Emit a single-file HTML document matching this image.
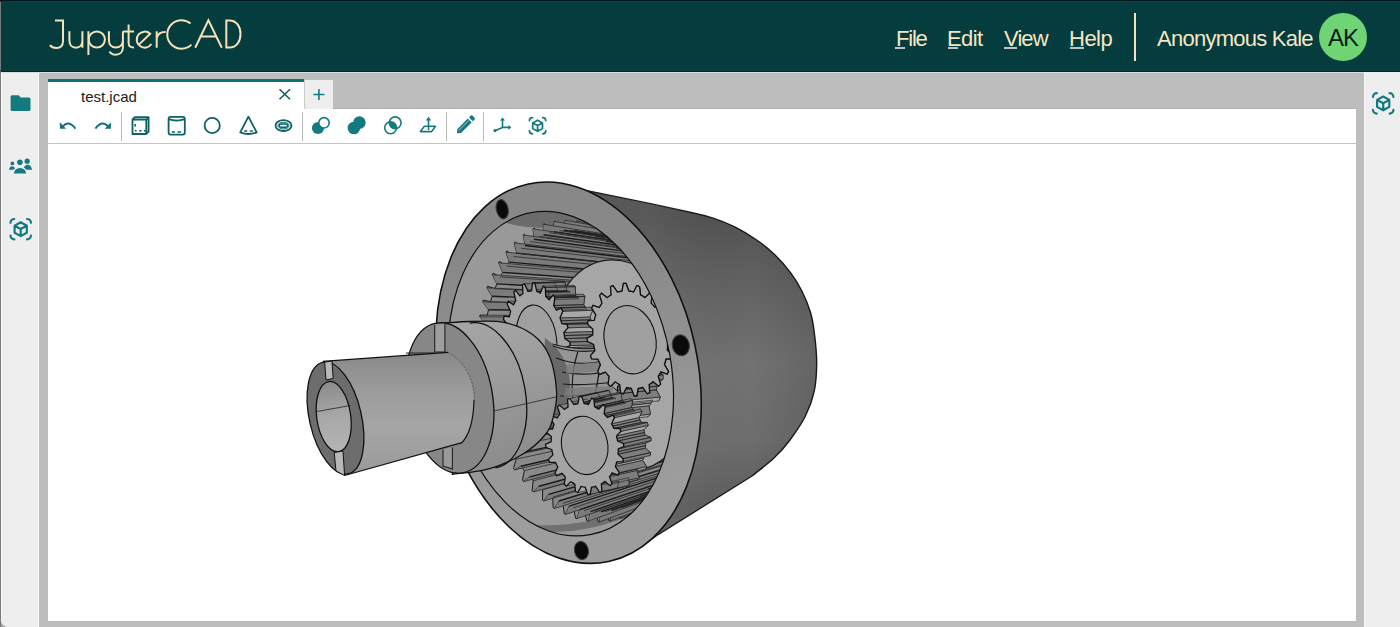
<!DOCTYPE html>
<html><head><meta charset="utf-8">
<style>
*{margin:0;padding:0;box-sizing:border-box}
html,body{width:1400px;height:627px;overflow:hidden;background:#eeeeee;font-family:"Liberation Sans",sans-serif}
.abs{position:absolute}
#hdr{left:0;top:0;width:1400px;height:72px;background:#053c3d;border-bottom:1px solid #02272a}
#lborder{left:0;top:0;width:1px;height:627px;background:#7a7a7a}
#lside{left:1px;top:72px;width:38px;height:555px;background:#eeeeee;border-left:1px solid #fafafa;border-right:1px solid #fafafa;border-bottom-left-radius:7px}
#main{left:39px;top:72px;width:1325px;height:555px;background:#bdbdbd}
#rside{left:1364px;top:72px;width:36px;height:555px;background:#eeeeee;border-left:1px solid #f8f8f8}
#tab{left:48px;top:79px;width:256px;height:31px;background:#fff;border-top:3px solid #0c7075}
#plus{left:304px;top:80px;width:29px;height:29px;background:#eeeeee;border-left:1px solid #c9c9c9}
#content{left:48px;top:109px;width:1308px;height:512px;background:#fff}
#toolbar{left:48px;top:109px;width:1308px;height:35px;border-bottom:1px solid #c4c4c4}
.sep{position:absolute;top:112px;width:1px;height:29px;background:#b8b8b8}
.menu{position:absolute;top:26px;font-size:22px;color:#f3e6c4;letter-spacing:-0.3px}
.ul{position:absolute;top:47px;height:2px;background:#b9c6c4}
.menu u{text-decoration:none;border-bottom:2px solid #9bb0b0}
svg{position:absolute;overflow:visible}
</style></head><body>
<div id="hdr" class="abs"></div>
<div class="abs" style="left:0;top:610px;width:12px;height:17px;background:#a0a0a0"></div>
<div id="lside" class="abs"></div>
<div id="main" class="abs"></div>
<div id="rside" class="abs"></div>
<div id="lborder" class="abs"></div>
<div class="abs" style="left:0;top:0;width:1400px;height:1px;background:#01161b"></div>
<div class="abs" style="left:0;top:1px;width:1400px;height:1px;background:#113d42"></div>
<div class="abs" style="left:1px;top:72px;width:1363px;height:1px;background:#dcdcdc"></div>
<div class="abs" style="left:0;top:70px;width:1400px;height:1px;background:#123f43"></div>
<div class="abs" style="left:333px;top:108px;width:1023px;height:1px;background:#aeaeae"></div>
<div id="tab" class="abs"></div>
<div id="plus" class="abs"></div>
<div id="content" class="abs"></div>
<div id="toolbar" class="abs"></div>
<div class="sep" style="left:121px"></div>
<div class="sep" style="left:302px"></div>
<div class="sep" style="left:446px"></div>
<div class="sep" style="left:483px"></div>

<!--MODEL-->
<svg width="1400" height="627" style="left:0;top:0">
<defs>
<linearGradient id="gBody" gradientUnits="userSpaceOnUse" x1="700" y1="205" x2="740" y2="500"><stop offset="0" stop-color="#4e4e4e"/><stop offset="0.25" stop-color="#606060"/><stop offset="0.55" stop-color="#727272"/><stop offset="0.8" stop-color="#6e6e6e"/><stop offset="1" stop-color="#5e5e5e"/></linearGradient>
<linearGradient id="gBody2" gradientUnits="userSpaceOnUse" x1="650" y1="0" x2="820" y2="0"><stop offset="0" stop-color="#fff" stop-opacity="0.06"/><stop offset="0.6" stop-color="#000" stop-opacity="0"/><stop offset="1" stop-color="#000" stop-opacity="0.12"/></linearGradient>
<linearGradient id="gShaft" gradientUnits="userSpaceOnUse" x1="0" y1="355" x2="0" y2="475"><stop offset="0" stop-color="#8a8a8a"/><stop offset="0.3" stop-color="#9c9c9c"/><stop offset="0.6" stop-color="#a5a5a5"/><stop offset="1" stop-color="#9a9a9a"/></linearGradient>
<linearGradient id="gCollar" x1="0" y1="0" x2="0.2" y2="1"><stop offset="0" stop-color="#a6a6a6"/><stop offset="0.5" stop-color="#9b9b9b"/><stop offset="1" stop-color="#8c8c8c"/></linearGradient>
<linearGradient id="gBore" x1="0" y1="0" x2="0" y2="1"><stop offset="0" stop-color="#8a8a8a"/><stop offset="0.5" stop-color="#a8a8a8"/><stop offset="1" stop-color="#b4b4b4"/></linearGradient>
<clipPath id="cE2"><ellipse cx="560.7" cy="373.7" rx="163.7" ry="110.7" transform="rotate(79.6 560.7 373.7)"/></clipPath>
<linearGradient id="gFlange" gradientUnits="userSpaceOnUse" x1="435" y1="0" x2="700" y2="0"><stop offset="0" stop-color="#888888"/><stop offset="0.5" stop-color="#929292"/><stop offset="1" stop-color="#9d9d9d"/></linearGradient>
</defs>
<path d="M576,188.5 L649.3,203.4  C656.1,204.9 679.5,209.9 690,212.3 C700.5,214.7 704.8,215.5 712.3,217.9 C719.8,220.3 727.2,223.1 734.7,226.8 C742.2,230.5 750.3,235.5 757,240.2 C763.7,244.8 769.2,249.3 774.8,254.7 C780.4,260.1 786,266.6 790.5,272.6 C795,278.6 798.2,283.8 801.6,290.5 C805,297.2 808.4,305.4 810.6,312.8 C812.8,320.2 813.6,326.7 814.6,335.1 C815.6,343.5 816.8,353.8 816.7,363.2 C816.6,372.6 816.1,382.6 814.2,391.4 C812.3,400.2 809.5,407.8 805.4,416 C801.3,424.2 794.8,433.5 789.6,440.5 C784.4,447.5 780.3,452.1 774,458 C767.7,463.9 755.7,473 752,476 L658.5,534.3 L637,549.7 L602.8,561.2 L585,562 L565,368 Z" fill="url(#gBody)" stroke="#1a1a1a" stroke-width="1.4"/>
<path d="M576,188.5 L649.3,203.4  C656.1,204.9 679.5,209.9 690,212.3 C700.5,214.7 704.8,215.5 712.3,217.9 C719.8,220.3 727.2,223.1 734.7,226.8 C742.2,230.5 750.3,235.5 757,240.2 C763.7,244.8 769.2,249.3 774.8,254.7 C780.4,260.1 786,266.6 790.5,272.6 C795,278.6 798.2,283.8 801.6,290.5 C805,297.2 808.4,305.4 810.6,312.8 C812.8,320.2 813.6,326.7 814.6,335.1 C815.6,343.5 816.8,353.8 816.7,363.2 C816.6,372.6 816.1,382.6 814.2,391.4 C812.3,400.2 809.5,407.8 805.4,416 C801.3,424.2 794.8,433.5 789.6,440.5 C784.4,447.5 780.3,452.1 774,458 C767.7,463.9 755.7,473 752,476 L658.5,534.3 L637,549.7 L602.8,561.2 L585,562 L565,368 Z" fill="url(#gBody2)"/>
<ellipse cx="568.5" cy="372.7" rx="193" ry="129.4" transform="rotate(78 568.5 372.7)" fill="url(#gFlange)" stroke="#111" stroke-width="1.6"/>
<g clip-path="url(#cE2)">
<rect x="390" y="200" width="350" height="340" fill="#999999"/>
<path d="M503,222 L520,200 L650,200 L650,262 C620,238 585,228 550,228 C530,228 515,226 503,222 Z" fill="#6c6c6c"/><path d="M530,530 C565,536 610,528 650,506 L646,500 C610,520 570,527 535,525 Z" fill="#707070"/>
<path d="M677.1,355.3 L677.7,358.4 L684.9,361.4 L685.2,363.3 L679,367.5 L679.4,370.5 L679.7,373.6 L686.8,377.7 L686.9,379.6 L680.4,382.7 L680.5,385.8 L680.6,388.8 L687.4,393.9 L687.4,395.9 L680.5,397.9 L680.4,400.8 L680.3,403.8 L686.8,409.9 L686.7,411.8 L679.6,412.7 L679.2,415.6 L678.9,418.4 L685,425.4 L684.7,427.2 L677.5,427 L676.9,429.8 L676.3,432.5 L682,440.3 L681.6,442 L674.2,440.6 L673.5,443.3 L672.7,445.9 L677.8,454.4 L677.2,456 L670,453.5 L669,455.9 L667.9,458.3 L672.5,467.5 L671.8,469 L664.6,465.3 L663.4,467.6 L662.2,469.8 L666.2,479.4 L665.3,480.8 L658.3,476.1 L657,478.1 L655.6,480.1 L658.8,490.1 L657.9,491.3 L651.2,485.7 L649.6,487.4 L648.1,489.1 L650.6,499.4 L649.5,500.4 L643.2,493.9 L641.5,495.3 L639.8,496.7 L641.5,507.2 L640.4,508 L634.5,500.6 L632.7,501.8 L630.8,502.9 L631.8,513.4 L630.6,514 L625.2,505.9 L623.2,506.7 L621.3,507.5 L621.5,517.9 L620.2,518.4 L615.4,509.5 L613.3,510.1 L611.3,510.5 L610.7,520.7 L609.4,521 L605.2,511.6 L603.1,511.8 L601,511.9 L599.6,521.8 L598.3,521.8 L594.7,511.9 L592.6,511.8 L590.5,511.6 L588.3,521.1 L586.9,520.9 L584.1,510.7 L582,510.2 L579.8,509.7 L576.9,518.6 L575.6,518.2 L573.5,507.8 L571.4,507 L569.2,506.2 L565.6,514.4 L564.3,513.8 L562.9,503.3 L560.9,502.2 L558.8,501 L554.5,508.5 L553.2,507.7 L552.7,497.2 L550.6,495.8 L548.6,494.4 L543.7,501 L542.5,500 L542.7,489.7 L540.8,488 L538.9,486.3 L533.4,492 L532.2,490.8 L533.2,480.8 L531.4,478.8 L529.6,476.9 L523.6,481.6 L522.5,480.2 L524.3,470.6 L522.6,468.4 L520.9,466.2 L514.6,469.9 L513.5,468.4 L516.1,459.2 L514.5,456.8 L513,454.4 L506.3,457 L505.4,455.3 L508.7,446.8 L507.3,444.2 L505.9,441.6 L498.9,443.1 L498.1,441.3 L502.1,433.5 L500.9,430.8 L499.7,428 L492.5,428.3 L491.8,426.5 L496.4,419.5 L495.4,416.6 L494.5,413.7 L487.2,412.9 L486.6,411 L491.8,404.9 L491,401.9 L490.2,398.9 L482.9,397 L482.5,395.1 L488.2,389.9 L487.7,386.9 L487.1,383.8 L479.9,380.8 L479.6,378.9 L485.8,374.7 L485.4,371.7 L485.1,368.6 L478,364.5 L477.9,362.6 L484.4,359.5 L484.3,356.4 L484.2,353.4 L477.4,348.3 L477.4,346.3 L484.3,344.3 L484.4,341.4 L484.5,338.4 L478,332.3 L478.1,330.4 L485.2,329.5 L485.6,326.6 L485.9,323.8 L479.8,316.8 L480.1,315 L487.3,315.2 L487.9,312.4 L488.5,309.7 L482.8,301.9 L483.2,300.2 L490.6,301.6 L491.3,298.9 L492.1,296.3 L487,287.8 L487.6,286.2 L494.8,288.7 L495.8,286.3 L496.9,283.9 L492.3,274.7 L493,273.2 L500.2,276.9 L501.4,274.6 L502.6,272.4 L498.6,262.8 L499.5,261.4 L506.5,266.1 L507.8,264.1 L509.2,262.1 L506,252.1 L506.9,250.9 L513.6,256.5 L515.2,254.8 L516.7,253.1 L514.2,242.8 L515.3,241.8 L521.6,248.3 L523.3,246.9 L525,245.5 L523.3,235 L524.4,234.2 L530.3,241.6 L532.1,240.4 L534,239.3 L533,228.8 L534.2,228.2 L539.6,236.3 L541.6,235.5 L543.5,234.7 L543.3,224.3 L544.6,223.8 L549.4,232.7 L551.5,232.1 L553.5,231.7 L554.1,221.5 L555.4,221.2 L559.6,230.6 L561.7,230.4 L563.8,230.3 L565.2,220.4 L566.5,220.4 L570.1,230.3 L572.2,230.4 L574.3,230.6 L576.5,221.1 L577.9,221.3 L580.7,231.5 L582.8,232 L585,232.5 L587.9,223.6 L589.2,224 L591.3,234.4 L593.4,235.2 L595.6,236 L599.2,227.8 L600.5,228.4 L601.9,238.9 L603.9,240 L606,241.2 L610.3,233.7 L611.6,234.5 L612.1,245 L614.2,246.4 L616.2,247.8 L621.1,241.2 L622.3,242.2 L622.1,252.5 L624,254.2 L625.9,255.9 L631.4,250.2 L632.6,251.4 L631.6,261.4 L633.4,263.4 L635.2,265.3 L641.2,260.6 L642.3,262 L640.5,271.6 L642.2,273.8 L643.9,276 L650.2,272.3 L651.3,273.8 L648.7,283 L650.3,285.4 L651.8,287.8 L658.5,285.2 L659.4,286.9 L656.1,295.4 L657.5,298 L658.9,300.6 L665.9,299.1 L666.7,300.9 L662.7,308.7 L663.9,311.4 L665.1,314.2 L672.3,313.9 L673,315.7 L668.4,322.7 L669.4,325.6 L670.3,328.5 L677.6,329.3 L678.2,331.2 L673,337.3 L673.8,340.3 L674.6,343.3 L681.9,345.2 L682.3,347.1 L676.6,352.3Z" fill="#8a8a8a" stroke="#1a1a1a" stroke-width="1"/>
<path d="M677.7,358.4 L684.9,361.4 L854.3,346.3 L847.1,344.6Z M679.7,373.6 L686.8,377.7 L855.5,356.7 L848.6,354.3Z M680.6,388.8 L687.4,393.9 L855.3,367.1 L848.8,364.2Z M680.3,403.8 L686.8,409.9 L853.7,377.5 L847.7,374Z M678.9,418.4 L685,425.4 L850.8,387.8 L845.3,383.7Z M676.3,432.5 L682,440.3 L846.7,398 L841.7,393.2Z M672.7,445.9 L677.8,454.4 L841.3,407.8 L837,402.5Z M667.9,458.3 L672.5,467.5 L834.9,417.3 L831.3,411.5Z M662.2,469.8 L666.2,479.4 L827.6,426.2 L824.7,419.9Z M655.6,480.1 L658.8,490.1 L819.4,434.5 L817.3,427.7Z M648.1,489.1 L650.6,499.4 L810.6,441.9 L809.2,434.8Z M639.8,496.7 L641.5,507.2 L801.1,448.5 L800.4,441.1Z M630.8,502.9 L631.8,513.4 L791.1,454 L791.2,446.4Z M621.3,507.5 L621.5,517.9 L780.7,458.3 L781.5,450.7Z M611.3,510.5 L610.7,520.7 L770,461.4 L771.6,453.8Z M601,511.9 L599.6,521.8 L759.2,463.3 L761.5,455.8Z M590.5,511.6 L588.3,521.1 L748.4,463.8 L751.3,456.6Z M579.8,509.7 L576.9,518.6 L737.6,462.9 L741.1,456Z M569.2,506.2 L565.6,514.4 L726.9,460.7 L731.1,454.3Z M558.8,501 L554.5,508.5 L716.6,457.2 L721.3,451.3Z M548.6,494.4 L543.7,501 L706.6,452.4 L711.9,447Z M538.9,486.3 L533.4,492 L697.1,446.3 L702.9,441.7Z M529.6,476.9 L523.6,481.6 L688.2,439.1 L694.4,435.2Z M520.9,466.2 L514.6,469.9 L680,430.8 L686.5,427.7Z M513,454.4 L506.3,457 L672.6,421.6 L679.4,419.3Z M505.9,441.6 L498.9,443.1 L666,411.5 L673,410.1Z M499.7,428 L492.5,428.3 L660.2,400.7 L667.4,400.1Z M494.5,413.7 L487.2,412.9 L655.5,389.3 L662.7,389.7Z M490.2,398.9 L482.9,397 L651.8,377.5 L659,378.7Z M487.1,383.8 L479.9,380.8 L649.2,365.5 L656.3,367.5Z M485.1,368.6 L478,364.5 L647.6,353.3 L654.6,356.2Z M484.2,353.4 L477.4,348.3 L647.2,341.1 L654,344.9Z M484.5,338.4 L478,332.3 L647.9,329.2 L654.4,333.7Z M485.9,323.8 L479.8,316.8 L649.8,317.6 L655.9,322.8Z M488.5,309.7 L482.8,301.9 L652.7,306.5 L658.5,312.3Z M492.1,296.3 L487,287.8 L656.8,296.1 L662,302.4Z M496.9,283.9 L492.3,274.7 L661.9,286.4 L666.6,293.2Z M502.6,272.4 L498.6,262.8 L668,277.7 L672.1,284.9Z M509.2,262.1 L506,252.1 L675.1,269.9 L678.5,277.4Z M516.7,253.1 L514.2,242.8 L683,263.3 L685.8,271Z M525,245.5 L523.3,235 L691.7,257.8 L693.8,265.6Z M534,239.3 L533,228.8 L701.2,253.7 L702.5,261.4Z M543.5,234.7 L543.3,224.3 L711.2,250.8 L711.8,258.4Z M553.5,231.7 L554.1,221.5 L721.8,249.2 L721.6,256.6Z M563.8,230.3 L565.2,220.4 L732.8,248.9 L731.8,256Z M574.3,230.6 L576.5,221.1 L744,250 L742.3,256.7Z M585,232.5 L587.9,223.6 L755.4,252.3 L753,258.5Z M595.6,236 L599.2,227.8 L766.8,255.9 L763.6,261.5Z M606,241.2 L610.3,233.7 L778.2,260.5 L774.2,265.5Z M616.2,247.8 L621.1,241.2 L789.2,266.2 L784.6,270.6Z M625.9,255.9 L631.4,250.2 L799.9,272.9 L794.7,276.5Z M635.2,265.3 L641.2,260.6 L810,280.3 L804.3,283.3Z M643.9,276 L650.2,272.3 L819.5,288.5 L813.2,290.7Z M651.8,287.8 L658.5,285.2 L828.1,297.2 L821.4,298.8Z M658.9,300.6 L665.9,299.1 L835.7,306.4 L828.8,307.3Z M665.1,314.2 L672.3,313.9 L842.3,316 L835.1,316.2Z M670.3,328.5 L677.6,329.3 L847.6,325.9 L840.3,325.5Z M674.6,343.3 L681.9,345.2 L851.6,336 L844.3,334.9Z" fill="#7b7b7b"/>
<path d="M677.7,358.4 L847.1,344.6 M679.7,373.6 L848.6,354.3 M680.6,388.8 L848.8,364.2 M680.3,403.8 L847.7,374 M678.9,418.4 L845.3,383.7 M676.3,432.5 L841.7,393.2 M672.7,445.9 L837,402.5 M667.9,458.3 L831.3,411.5 M662.2,469.8 L824.7,419.9 M655.6,480.1 L817.3,427.7 M648.1,489.1 L809.2,434.8 M639.8,496.7 L800.4,441.1 M630.8,502.9 L791.2,446.4 M621.3,507.5 L781.5,450.7 M611.3,510.5 L771.6,453.8 M601,511.9 L761.5,455.8 M590.5,511.6 L751.3,456.6 M579.8,509.7 L741.1,456 M569.2,506.2 L731.1,454.3 M558.8,501 L721.3,451.3 M548.6,494.4 L711.9,447 M538.9,486.3 L702.9,441.7 M529.6,476.9 L694.4,435.2 M520.9,466.2 L686.5,427.7 M513,454.4 L679.4,419.3 M505.9,441.6 L673,410.1 M499.7,428 L667.4,400.1 M494.5,413.7 L662.7,389.7 M490.2,398.9 L659,378.7 M487.1,383.8 L656.3,367.5 M485.1,368.6 L654.6,356.2 M484.2,353.4 L654,344.9 M484.5,338.4 L654.4,333.7 M485.9,323.8 L655.9,322.8 M488.5,309.7 L658.5,312.3 M492.1,296.3 L662,302.4 M496.9,283.9 L666.6,293.2 M502.6,272.4 L672.1,284.9 M509.2,262.1 L678.5,277.4 M516.7,253.1 L685.8,271 M525,245.5 L693.8,265.6 M534,239.3 L702.5,261.4 M543.5,234.7 L711.8,258.4 M553.5,231.7 L721.6,256.6 M563.8,230.3 L731.8,256 M574.3,230.6 L742.3,256.7 M585,232.5 L753,258.5 M595.6,236 L763.6,261.5 M606,241.2 L774.2,265.5 M616.2,247.8 L784.6,270.6 M625.9,255.9 L794.7,276.5 M635.2,265.3 L804.3,283.3 M643.9,276 L813.2,290.7 M651.8,287.8 L821.4,298.8 M658.9,300.6 L828.8,307.3 M665.1,314.2 L835.1,316.2 M670.3,328.5 L840.3,325.5 M674.6,343.3 L844.3,334.9" stroke="#1a1a1a" stroke-width="1.4" fill="none"/>
<path d="M684.9,361.4 L854.3,346.3 M679,367.5 L848.2,350.4 M686.8,377.7 L855.5,356.7 M680.4,382.7 L848.9,360.2 M687.4,393.9 L855.3,367.1 M680.5,397.9 L848.3,370 M686.8,409.9 L853.7,377.5 M679.6,412.7 L846.4,379.8 M685,425.4 L850.8,387.8 M677.5,427 L843.3,389.4 M682,440.3 L846.7,398 M674.2,440.6 L839,398.8 M677.8,454.4 L841.3,407.8 M670,453.5 L833.7,407.9 M672.5,467.5 L834.9,417.3 M664.6,465.3 L827.5,416.6 M666.2,479.4 L827.6,426.2 M658.3,476.1 L820.4,424.7 M658.8,490.1 L819.4,434.5 M651.2,485.7 L812.5,432.1 M650.6,499.4 L810.6,441.9 M643.2,493.9 L804,438.7 M641.5,507.2 L801.1,448.5 M634.5,500.6 L794.9,444.4 M631.8,513.4 L791.1,454 M625.2,505.9 L785.4,449.1 M621.5,517.9 L780.7,458.3 M615.4,509.5 L775.6,452.7 M610.7,520.7 L770,461.4 M605.2,511.6 L765.5,455.2 M599.6,521.8 L759.2,463.3 M594.7,511.9 L755.4,456.4 M588.3,521.1 L748.4,463.8 M584.1,510.7 L745.2,456.4 M576.9,518.6 L737.6,462.9 M573.5,507.8 L735.1,455.1 M565.6,514.4 L726.9,460.7 M562.9,503.3 L725.2,452.6 M554.5,508.5 L716.6,457.2 M552.7,497.2 L715.6,448.9 M543.7,501 L706.6,452.4 M542.7,489.7 L706.4,444 M533.4,492 L697.1,446.3 M533.2,480.8 L697.7,437.9 M523.6,481.6 L688.2,439.1 M524.3,470.6 L689.6,430.8 M514.6,469.9 L680,430.8 M516.1,459.2 L682.1,422.7 M506.3,457 L672.6,421.6 M508.7,446.8 L675.4,413.8 M498.9,443.1 L666,411.5 M502.1,433.5 L669.5,404.2 M492.5,428.3 L660.2,400.7 M496.4,419.5 L664.5,393.9 M487.2,412.9 L655.5,389.3 M491.8,404.9 L660.4,383.2 M482.9,397 L651.8,377.5 M488.2,389.9 L657.3,372.1 M479.9,380.8 L649.2,365.5 M485.8,374.7 L655.2,360.8 M478,364.5 L647.6,353.3 M484.4,359.5 L654.1,349.4 M477.4,348.3 L647.2,341.1 M484.3,344.3 L654.1,338.1 M478,332.3 L647.9,329.2 M485.2,329.5 L655.2,327.1 M479.8,316.8 L649.8,317.6 M487.3,315.2 L657.3,316.5 M482.8,301.9 L652.7,306.5 M490.6,301.6 L660.5,306.3 M487,287.8 L656.8,296.1 M494.8,288.7 L664.7,296.8 M492.3,274.7 L661.9,286.4 M500.2,276.9 L669.8,288.1 M498.6,262.8 L668,277.7 M506.5,266.1 L675.9,280.3 M506,252.1 L675.1,269.9 M513.6,256.5 L682.8,273.4 M514.2,242.8 L683,263.3 M521.6,248.3 L690.5,267.6 M523.3,235 L691.7,257.8 M530.3,241.6 L699,262.9 M533,228.8 L701.2,253.7 M539.6,236.3 L708.1,259.4 M543.3,224.3 L711.2,250.8 M549.4,232.7 L717.7,257.1 M554.1,221.5 L721.8,249.2 M559.6,230.6 L727.7,256.1 M565.2,220.4 L732.8,248.9 M570.1,230.3 L738.1,256.3 M576.5,221.1 L744,250 M580.7,231.5 L748.7,257.6 M587.9,223.6 L755.4,252.3 M591.3,234.4 L759.4,260.2 M599.2,227.8 L766.8,255.9 M601.9,238.9 L770,263.8 M610.3,233.7 L778.2,260.5 M612.1,245 L780.5,268.5 M621.1,241.2 L789.2,266.2 M622.1,252.5 L790.7,274.1 M631.4,250.2 L799.9,272.9 M631.6,261.4 L800.5,280.5 M641.2,260.6 L810,280.3 M640.5,271.6 L809.7,287.7 M650.2,272.3 L819.5,288.5 M648.7,283 L818.2,295.5 M658.5,285.2 L828.1,297.2 M656.1,295.4 L825.9,303.9 M665.9,299.1 L835.7,306.4 M662.7,308.7 L832.7,312.6 M672.3,313.9 L842.3,316 M668.4,322.7 L838.4,321.8 M677.6,329.3 L847.6,325.9 M673,337.3 L842.9,331.1 M681.9,345.2 L851.6,336 M676.6,352.3 L846.2,340.7" stroke="#2a2a2a" stroke-width="0.8" fill="none"/>
<ellipse cx="622" cy="365" rx="72" ry="106" transform="rotate(-10 622 365)" fill="#a6a6a6" stroke="#1a1a1a" stroke-width="1.1"/>
<path d="M656.8,366.4 L657.4,370.4 L663,374.8 L663,379.4 L657.5,382.3 L657,386.2 L656.3,389.9 L660.2,397 L658.7,400.9 L652.6,400.2 L650.9,403.2 L649,405.9 L650.4,414.2 L647.7,416.8 L642.1,412.5 L639.5,414 L636.8,415.2 L635.5,423.1 L632.2,423.7 L628.3,416.7 L625.3,416.5 L622.3,415.9 L618.5,421.9 L615.2,420.4 L613.7,412.1 L611,410.2 L608.3,408 L602.8,410.8 L600.1,407.6 L601.3,399.6 L599.4,396.4 L597.6,392.9 L591.4,392 L589.9,387.7 L593.6,381.6 L592.8,377.7 L592.2,373.7 L586.7,369.3 L586.6,364.7 L592.1,361.8 L592.6,357.9 L593.3,354.2 L589.4,347.1 L590.9,343.2 L597,343.9 L598.7,340.9 L600.7,338.2 L599.2,329.9 L601.9,327.4 L607.5,331.7 L610.1,330.1 L612.8,328.9 L614.1,321 L617.4,320.4 L621.4,327.4 L624.3,327.6 L627.3,328.2 L631.1,322.2 L634.4,323.7 L635.9,332 L638.7,333.9 L641.3,336.1 L646.8,333.3 L649.5,336.5 L648.3,344.5 L650.3,347.7 L652,351.2 L658.2,352.1 L659.7,356.4 L656,362.5Z" fill="#8c8c8c" stroke="#1a1a1a" stroke-width="0.8"/>
<path d="M623.2,383.4 L617.7,386.3 L657.5,382.3 L663,379.4Z M620.4,400.9 L618.9,404.9 L658.7,400.9 L660.2,397Z M612.8,404.1 L611.1,407.1 L650.9,403.2 L652.6,400.2Z M611.1,407.1 L609.2,409.9 L649,405.9 L650.9,403.2Z M610.6,418.2 L607.9,420.7 L647.7,416.8 L650.4,414.2Z M602.3,416.4 L599.7,417.9 L639.5,414 L642.1,412.5Z M599.7,417.9 L597,419.2 L636.8,415.2 L639.5,414Z M595.7,427.1 L592.4,427.6 L632.2,423.7 L635.5,423.1Z M582.5,419.9 L578.7,425.8 L618.5,421.9 L622.3,415.9Z M568.5,411.9 L563,414.8 L602.8,410.8 L608.3,408Z M619.9,360.4 L616.2,366.4 L656,362.5 L659.7,356.4Z" fill="#a8a8a8" stroke="#1a1a1a" stroke-width="0.6"/>
<path d="M617,370.4 L617.6,374.4 L657.4,370.4 L656.8,366.4Z M617.6,374.4 L623.1,378.7 L663,374.8 L657.4,370.4Z M623.1,378.7 L623.2,383.4 L663,379.4 L663,374.8Z M617.7,386.3 L617.2,390.1 L657,386.2 L657.5,382.3Z M617.2,390.1 L616.5,393.9 L656.3,389.9 L657,386.2Z M616.5,393.9 L620.4,400.9 L660.2,397 L656.3,389.9Z M609.2,409.9 L610.6,418.2 L650.4,414.2 L649,405.9Z M597,419.2 L595.7,427.1 L635.5,423.1 L636.8,415.2Z M551.1,347.1 L557.2,347.9 L597,343.9 L590.9,343.2Z M562.1,331.3 L567.7,335.6 L607.5,331.7 L601.9,327.4Z M577.6,324.4 L581.6,331.3 L621.4,327.4 L617.4,320.4Z M581.6,331.3 L584.5,331.5 L624.3,327.6 L621.4,327.4Z M584.5,331.5 L587.5,332.1 L627.3,328.2 L624.3,327.6Z M591.3,326.2 L594.6,327.6 L634.4,323.7 L631.1,322.2Z M594.6,327.6 L596.1,335.9 L635.9,332 L634.4,323.7Z M596.1,335.9 L598.8,337.8 L638.7,333.9 L635.9,332Z M598.8,337.8 L601.5,340.1 L641.3,336.1 L638.7,333.9Z M607,337.2 L609.7,340.5 L649.5,336.5 L646.8,333.3Z M609.7,340.5 L608.5,348.4 L648.3,344.5 L649.5,336.5Z M608.5,348.4 L610.4,351.7 L650.3,347.7 L648.3,344.5Z M610.4,351.7 L612.2,355.1 L652,351.2 L650.3,347.7Z M612.2,355.1 L618.4,356 L658.2,352.1 L652,351.2Z M618.4,356 L619.9,360.4 L659.7,356.4 L658.2,352.1Z M616.2,366.4 L617,370.4 L656.8,366.4 L656,362.5Z" fill="#7e7e7e" stroke="#1a1a1a" stroke-width="0.6"/>
<path d="M617,370.4 L617.6,374.4 L623.1,378.7 L623.2,383.4 L617.7,386.3 L617.2,390.1 L616.5,393.9 L620.4,400.9 L618.9,404.9 L612.8,404.1 L611.1,407.1 L609.2,409.9 L610.6,418.2 L607.9,420.7 L602.3,416.4 L599.7,417.9 L597,419.2 L595.7,427.1 L592.4,427.6 L588.4,420.7 L585.5,420.5 L582.5,419.9 L578.7,425.8 L575.4,424.4 L573.9,416.1 L571.2,414.2 L568.5,411.9 L563,414.8 L560.3,411.5 L561.5,403.6 L559.6,400.3 L557.8,396.9 L551.6,396 L550.1,391.6 L553.8,385.6 L553,381.6 L552.4,377.6 L546.9,373.3 L546.8,368.6 L552.3,365.7 L552.8,361.9 L553.5,358.1 L549.6,351.1 L551.1,347.1 L557.2,347.9 L558.9,344.9 L560.8,342.1 L559.4,333.8 L562.1,331.3 L567.7,335.6 L570.3,334.1 L573,332.8 L574.3,324.9 L577.6,324.4 L581.6,331.3 L584.5,331.5 L587.5,332.1 L591.3,326.2 L594.6,327.6 L596.1,335.9 L598.8,337.8 L601.5,340.1 L607,337.2 L609.7,340.5 L608.5,348.4 L610.4,351.7 L612.2,355.1 L618.4,356 L619.9,360.4 L616.2,366.4Z" fill="#a4a4a4" stroke="#111" stroke-width="1.3"/>
<path d="M594.4,334.6 L594.8,337.7 L599.9,341.1 L600.1,344.7 L595.2,346.8 L595.1,349.8 L595,352.7 L599.4,358.5 L599,361.8 L593.7,361.2 L593.1,363.9 L592.3,366.4 L595.8,374 L594.7,376.7 L589.5,373.4 L588.4,375.4 L587.2,377.4 L589.2,386 L587.6,387.9 L583.1,382.2 L581.6,383.4 L580,384.5 L580.4,393.4 L578.5,394.2 L575,386.7 L573.3,387 L571.5,387.1 L570.3,395.4 L568.2,395.1 L566.1,386.5 L564.3,385.8 L562.5,385 L559.8,391.8 L557.7,390.4 L557.3,381.6 L555.6,380.1 L553.9,378.4 L549.9,383 L548.1,380.7 L549.3,372.5 L547.9,370.2 L546.6,367.8 L541.7,369.9 L540.3,366.8 L543,360 L542,357.3 L541.1,354.4 L535.9,353.7 L535.1,350.2 L539,345.5 L538.6,342.5 L538.2,339.4 L533.1,336 L532.9,332.4 L537.7,330.3 L537.8,327.3 L538,324.4 L533.5,318.6 L534,315.3 L539.3,315.9 L539.9,313.2 L540.6,310.7 L537.2,303.1 L538.3,300.4 L543.4,303.7 L544.6,301.7 L545.8,299.7 L543.8,291.1 L545.4,289.2 L549.9,294.9 L551.4,293.7 L552.9,292.6 L552.5,283.7 L554.5,282.9 L557.9,290.4 L559.7,290.1 L561.4,289.9 L562.7,281.7 L564.8,282 L566.8,290.6 L568.6,291.3 L570.4,292.1 L573.2,285.3 L575.2,286.6 L575.7,295.5 L577.4,297 L579,298.7 L583,294.1 L584.9,296.4 L583.7,304.6 L585.1,306.9 L586.4,309.3 L591.3,307.2 L592.7,310.3 L589.9,317.1 L590.9,319.8 L591.8,322.7 L597.1,323.4 L597.9,326.9 L593.9,331.6Z" fill="#8c8c8c" stroke="#1a1a1a" stroke-width="0.8"/>
<path d="M570.1,345.6 L565.2,347.7 L595.2,346.8 L600.1,344.7Z M563.7,362.1 L563.1,364.8 L593.1,363.9 L593.7,361.2Z M563.1,364.8 L562.4,367.4 L592.3,366.4 L593.1,363.9Z M565.8,375 L564.7,377.7 L594.7,376.7 L595.8,374Z M559.5,374.3 L558.4,376.4 L588.4,375.4 L589.5,373.4Z M558.4,376.4 L557.2,378.3 L587.2,377.4 L588.4,375.4Z M559.2,387 L557.6,388.8 L587.6,387.9 L589.2,386Z M553.1,383.1 L551.6,384.4 L581.6,383.4 L583.1,382.2Z M551.6,384.4 L550,385.5 L580,384.5 L581.6,383.4Z M550.5,394.3 L548.5,395.2 L578.5,394.2 L580.4,393.4Z M545,387.6 L543.3,388 L573.3,387 L575,386.7Z M543.3,388 L541.5,388.1 L571.5,387.1 L573.3,387Z M532.6,386 L529.8,392.8 L559.8,391.8 L562.5,385Z M523.9,379.3 L519.9,384 L549.9,383 L553.9,378.4Z M516.6,368.8 L511.7,370.8 L541.7,369.9 L546.6,367.8Z M562.7,311.2 L560,318 L589.9,317.1 L592.7,310.3Z M567.9,327.8 L563.9,332.5 L593.9,331.6 L597.9,326.9Z" fill="#a8a8a8" stroke="#1a1a1a" stroke-width="0.6"/>
<path d="M564.4,335.6 L564.8,338.6 L594.8,337.7 L594.4,334.6Z M564.8,338.6 L569.9,342 L599.9,341.1 L594.8,337.7Z M569.9,342 L570.1,345.6 L600.1,344.7 L599.9,341.1Z M565.2,347.7 L565.2,350.7 L595.1,349.8 L595.2,346.8Z M565.2,350.7 L565,353.7 L595,352.7 L595.1,349.8Z M565,353.7 L569.5,359.5 L599.4,358.5 L595,352.7Z M569.5,359.5 L569,362.8 L599,361.8 L599.4,358.5Z M562.4,367.4 L565.8,375 L595.8,374 L592.3,366.4Z M557.2,378.3 L559.2,387 L589.2,386 L587.2,377.4Z M550,385.5 L550.5,394.3 L580.4,393.4 L580,384.5Z M541.5,388.1 L540.3,396.3 L570.3,395.4 L571.5,387.1Z M504,316.2 L509.3,316.9 L539.3,315.9 L534,315.3Z M508.3,301.3 L513.5,304.7 L543.4,303.7 L538.3,300.4Z M515.4,290.2 L519.9,295.9 L549.9,294.9 L545.4,289.2Z M524.5,283.8 L528,291.4 L557.9,290.4 L554.5,282.9Z M532.7,282.7 L534.8,282.9 L564.8,282 L562.7,281.7Z M534.8,282.9 L536.8,291.6 L566.8,290.6 L564.8,282Z M536.8,291.6 L538.7,292.2 L568.6,291.3 L566.8,290.6Z M538.7,292.2 L540.4,293 L570.4,292.1 L568.6,291.3Z M543.2,286.2 L545.3,287.6 L575.2,286.6 L573.2,285.3Z M545.3,287.6 L545.7,296.5 L575.7,295.5 L575.2,286.6Z M545.7,296.5 L547.4,298 L577.4,297 L575.7,295.5Z M547.4,298 L549.1,299.7 L579,298.7 L577.4,297Z M553.1,295 L554.9,297.3 L584.9,296.4 L583,294.1Z M554.9,297.3 L553.7,305.6 L583.7,304.6 L584.9,296.4Z M553.7,305.6 L555.1,307.8 L585.1,306.9 L583.7,304.6Z M555.1,307.8 L556.4,310.2 L586.4,309.3 L585.1,306.9Z M561.3,308.2 L562.7,311.2 L592.7,310.3 L591.3,307.2Z M560,318 L561,320.8 L590.9,319.8 L589.9,317.1Z M561,320.8 L561.9,323.6 L591.8,322.7 L590.9,319.8Z M561.9,323.6 L567.1,324.4 L597.1,323.4 L591.8,322.7Z M567.1,324.4 L567.9,327.8 L597.9,326.9 L597.1,323.4Z M563.9,332.5 L564.4,335.6 L594.4,334.6 L593.9,331.6Z" fill="#7e7e7e" stroke="#1a1a1a" stroke-width="0.6"/>
<path d="M564.4,335.6 L564.8,338.6 L569.9,342 L570.1,345.6 L565.2,347.7 L565.2,350.7 L565,353.7 L569.5,359.5 L569,362.8 L563.7,362.1 L563.1,364.8 L562.4,367.4 L565.8,375 L564.7,377.7 L559.5,374.3 L558.4,376.4 L557.2,378.3 L559.2,387 L557.6,388.8 L553.1,383.1 L551.6,384.4 L550,385.5 L550.5,394.3 L548.5,395.2 L545,387.6 L543.3,388 L541.5,388.1 L540.3,396.3 L538.2,396.1 L536.2,387.4 L534.3,386.8 L532.6,386 L529.8,392.8 L527.7,391.4 L527.3,382.5 L525.6,381 L523.9,379.3 L519.9,384 L518.1,381.7 L519.3,373.4 L517.9,371.2 L516.6,368.8 L511.7,370.8 L510.3,367.8 L513,361 L512,358.2 L511.1,355.4 L505.9,354.6 L505.1,351.2 L509.1,346.5 L508.6,343.4 L508.2,340.4 L503.1,337 L502.9,333.4 L507.8,331.3 L507.8,328.3 L508,325.3 L503.5,319.5 L504,316.2 L509.3,316.9 L509.9,314.2 L510.6,311.6 L507.2,304 L508.3,301.3 L513.5,304.7 L514.6,302.6 L515.8,300.7 L513.8,292 L515.4,290.2 L519.9,295.9 L521.4,294.6 L523,293.5 L522.5,284.7 L524.5,283.8 L528,291.4 L529.7,291 L531.5,290.9 L532.7,282.7 L534.8,282.9 L536.8,291.6 L538.7,292.2 L540.4,293 L543.2,286.2 L545.3,287.6 L545.7,296.5 L547.4,298 L549.1,299.7 L553.1,295 L554.9,297.3 L553.7,305.6 L555.1,307.8 L556.4,310.2 L561.3,308.2 L562.7,311.2 L560,318 L561,320.8 L561.9,323.6 L567.1,324.4 L567.9,327.8 L563.9,332.5Z" fill="#a4a4a4" stroke="#111" stroke-width="1.3"/>
<ellipse cx="536.5" cy="339.5" rx="20" ry="34.7" transform="rotate(-8 536.5 339.5)" fill="#a0a0a0" stroke="#111" stroke-width="1.1"/>
<path d="M552,344 C575,350 595,350 606,346 L612,352 L606,358 L616,364 L610,372 L618,378 L612,386 L618,392 L606,402 C585,404 568,406 554,412 Z" fill="#959595" stroke="#1a1a1a" stroke-width="1"/>
<path d="M545,338 C560,348 570,366 570,386 C570,402 564,416 552,428 L540,428 Z" fill="#686868"/>
<path d="M553,346 C572,353 592,352 607,349 M556,358 C576,366 597,364 612,358 M562,372 C580,376 598,374 614,370 M563,384 C580,386 598,384 614,382 M560,396 C578,396 594,394 612,394 M578,351 C573,366 571,386 573,404 M598,349 C601,364 598,384 593,401" fill="none" stroke="#1a1a1a" stroke-width="1.2"/>
<path d="M566,365 L612,361 L612,370 L566,374 Z M566,388 L614,386 L612,394 L564,397 Z" fill="#7c7c7c" opacity="0.8"/>
<path d="M644.4,432.5 L644.9,435.1 L650.8,437.4 L651.1,440.5 L645.6,443 L645.6,445.6 L645.4,448.2 L650.6,452.6 L650.1,455.6 L644.1,455.7 L643.4,458.1 L642.6,460.4 L646.6,466.6 L645.4,469.1 L639.5,466.9 L638.2,468.8 L636.8,470.6 L639.2,477.8 L637.4,479.6 L632.1,475.3 L630.4,476.6 L628.6,477.7 L629.2,485.3 L627,486.3 L622.9,480.2 L620.8,480.7 L618.8,481.1 L617.5,488.3 L615,488.3 L612.5,481.2 L610.4,480.8 L608.3,480.4 L605.2,486.5 L602.8,485.5 L602.1,478 L600.1,476.9 L598.2,475.6 L593.6,480.1 L591.5,478.3 L592.7,471 L591,469.2 L589.4,467.3 L583.9,469.7 L582.2,467.2 L585.2,461 L583.9,458.7 L582.8,456.3 L576.8,456.3 L575.8,453.4 L580.3,448.8 L579.6,446.2 L579.2,443.6 L573.3,441.3 L573,438.2 L578.5,435.7 L578.5,433.1 L578.7,430.5 L573.5,426 L574,423.1 L580,423 L580.7,420.6 L581.5,418.2 L577.5,412.1 L578.7,409.6 L584.6,411.8 L585.9,409.9 L587.2,408.1 L584.8,400.9 L586.7,399 L591.9,403.4 L593.7,402.1 L595.5,400.9 L594.9,393.4 L597.1,392.4 L601.2,398.4 L603.2,397.9 L605.3,397.6 L606.6,390.4 L609,390.4 L611.6,397.5 L613.7,397.8 L615.8,398.3 L618.8,392.2 L621.2,393.1 L622,400.7 L624,401.8 L625.9,403 L630.4,398.6 L632.6,400.4 L631.4,407.6 L633.1,409.4 L634.7,411.3 L640.2,409 L641.9,411.5 L638.9,417.7 L640.1,420 L641.2,422.4 L647.2,422.4 L648.2,425.3 L643.8,429.9Z" fill="#8c8c8c" stroke="#1a1a1a" stroke-width="0.8"/>
<path d="M623.8,446.6 L618.3,449 L645.6,443 L651.1,440.5Z M616.8,461.8 L616.1,464.2 L643.4,458.1 L644.1,455.7Z M616.1,464.2 L615.3,466.5 L642.6,460.4 L643.4,458.1Z M619.3,472.6 L618.1,475.1 L645.4,469.1 L646.6,466.6Z M612.1,472.9 L610.9,474.9 L638.2,468.8 L639.5,466.9Z M610.9,474.9 L609.5,476.7 L636.8,470.6 L638.2,468.8Z M611.9,483.9 L610.1,485.7 L637.4,479.6 L639.2,477.8Z M604.8,481.4 L603.1,482.7 L630.4,476.6 L632.1,475.3Z M603.1,482.7 L601.3,483.8 L628.6,477.7 L630.4,476.6Z M601.9,491.4 L599.6,492.3 L627,486.3 L629.2,485.3Z M595.5,486.3 L593.5,486.8 L620.8,480.7 L622.9,480.2Z M581,486.4 L577.9,492.5 L605.2,486.5 L608.3,480.4Z M570.8,481.7 L566.3,486.1 L593.6,480.1 L598.2,475.6Z M562.1,473.4 L556.5,475.7 L583.9,469.7 L589.4,467.3Z M614.5,417.6 L611.6,423.8 L638.9,417.7 L641.9,411.5Z M620.9,431.4 L616.5,435.9 L643.8,429.9 L648.2,425.3Z" fill="#a8a8a8" stroke="#1a1a1a" stroke-width="0.6"/>
<path d="M617.1,438.5 L617.6,441.1 L644.9,435.1 L644.4,432.5Z M617.6,441.1 L623.5,443.5 L650.8,437.4 L644.9,435.1Z M623.5,443.5 L623.8,446.6 L651.1,440.5 L650.8,437.4Z M618.3,449 L618.2,451.6 L645.6,445.6 L645.6,443Z M618.2,451.6 L618.1,454.2 L645.4,448.2 L645.6,445.6Z M618.1,454.2 L623.3,458.7 L650.6,452.6 L645.4,448.2Z M623.3,458.7 L622.8,461.6 L650.1,455.6 L650.6,452.6Z M615.3,466.5 L619.3,472.6 L646.6,466.6 L642.6,460.4Z M609.5,476.7 L611.9,483.9 L639.2,477.8 L636.8,470.6Z M601.3,483.8 L601.9,491.4 L629.2,485.3 L628.6,477.7Z M591.5,487.2 L590.2,494.3 L617.5,488.3 L618.8,481.1Z M546.6,429.2 L552.6,429 L580,423 L574,423.1Z M551.3,415.7 L557.3,417.9 L584.6,411.8 L578.7,409.6Z M559.3,405.1 L564.6,409.4 L591.9,403.4 L586.7,399Z M569.8,398.5 L573.9,404.5 L601.2,398.4 L597.1,392.4Z M575.9,404 L577.9,403.6 L605.3,397.6 L603.2,397.9Z M579.2,396.5 L581.7,396.4 L609,390.4 L606.6,390.4Z M581.7,396.4 L584.2,403.6 L611.6,397.5 L609,390.4Z M584.2,403.6 L586.3,403.9 L613.7,397.8 L611.6,397.5Z M586.3,403.9 L588.4,404.4 L615.8,398.3 L613.7,397.8Z M591.5,398.3 L593.9,399.2 L621.2,393.1 L618.8,392.2Z M593.9,399.2 L594.6,406.7 L622,400.7 L621.2,393.1Z M594.6,406.7 L596.6,407.9 L624,401.8 L622,400.7Z M596.6,407.9 L598.6,409.1 L625.9,403 L624,401.8Z M603.1,404.7 L605.2,406.5 L632.6,400.4 L630.4,398.6Z M605.2,406.5 L604.1,413.7 L631.4,407.6 L632.6,400.4Z M604.1,413.7 L605.7,415.5 L633.1,409.4 L631.4,407.6Z M605.7,415.5 L607.3,417.4 L634.7,411.3 L633.1,409.4Z M612.9,415.1 L614.5,417.6 L641.9,411.5 L640.2,409Z M611.6,423.8 L612.8,426.1 L640.1,420 L638.9,417.7Z M612.8,426.1 L613.9,428.4 L641.2,422.4 L640.1,420Z M613.9,428.4 L619.9,428.5 L647.2,422.4 L641.2,422.4Z M619.9,428.5 L620.9,431.4 L648.2,425.3 L647.2,422.4Z M616.5,435.9 L617.1,438.5 L644.4,432.5 L643.8,429.9Z" fill="#7e7e7e" stroke="#1a1a1a" stroke-width="0.6"/>
<path d="M617.1,438.5 L617.6,441.1 L623.5,443.5 L623.8,446.6 L618.3,449 L618.2,451.6 L618.1,454.2 L623.3,458.7 L622.8,461.6 L616.8,461.8 L616.1,464.2 L615.3,466.5 L619.3,472.6 L618.1,475.1 L612.1,472.9 L610.9,474.9 L609.5,476.7 L611.9,483.9 L610.1,485.7 L604.8,481.4 L603.1,482.7 L601.3,483.8 L601.9,491.4 L599.6,492.3 L595.5,486.3 L593.5,486.8 L591.5,487.2 L590.2,494.3 L587.7,494.4 L585.2,487.2 L583.1,486.9 L581,486.4 L577.9,492.5 L575.5,491.6 L574.8,484.1 L572.8,482.9 L570.8,481.7 L566.3,486.1 L564.2,484.3 L565.3,477.1 L563.7,475.3 L562.1,473.4 L556.5,475.7 L554.9,473.2 L557.8,467 L556.6,464.7 L555.5,462.4 L549.5,462.3 L548.5,459.4 L552.9,454.9 L552.3,452.3 L551.8,449.7 L545.9,447.3 L545.6,444.2 L551.1,441.8 L551.2,439.2 L551.3,436.6 L546.1,432.1 L546.6,429.2 L552.6,429 L553.3,426.6 L554.1,424.3 L550.1,418.2 L551.3,415.7 L557.3,417.9 L558.5,415.9 L559.9,414.1 L557.5,406.9 L559.3,405.1 L564.6,409.4 L566.3,408.1 L568.1,407 L567.5,399.4 L569.8,398.5 L573.9,404.5 L575.9,404 L577.9,403.6 L579.2,396.5 L581.7,396.4 L584.2,403.6 L586.3,403.9 L588.4,404.4 L591.5,398.3 L593.9,399.2 L594.6,406.7 L596.6,407.9 L598.6,409.1 L603.1,404.7 L605.2,406.5 L604.1,413.7 L605.7,415.5 L607.3,417.4 L612.9,415.1 L614.5,417.6 L611.6,423.8 L612.8,426.1 L613.9,428.4 L619.9,428.5 L620.9,431.4 L616.5,435.9Z" fill="#a4a4a4" stroke="#111" stroke-width="1.3"/>
<ellipse cx="584.7" cy="445.4" rx="23" ry="29.4" transform="rotate(-12 584.7 445.4)" fill="#a0a0a0" stroke="#111" stroke-width="1.1"/>
<path d="M666,331.9 L666.6,335 L672.7,337.8 L673.1,341.3 L667.5,344.2 L667.5,347.2 L667.3,350.2 L672.7,355.3 L672.2,358.7 L666,359 L665.3,361.8 L664.4,364.5 L668.6,371.3 L667.3,374.1 L661,371.9 L659.7,374.1 L658.2,376.3 L660.6,384.1 L658.6,386.2 L653,381.7 L651.1,383.2 L649.1,384.5 L649.7,392.7 L647.2,393.8 L642.8,387.3 L640.5,387.9 L638.3,388.3 L636.9,396 L634.2,396 L631.3,388.3 L628.9,388 L626.6,387.4 L623.3,393.9 L620.7,392.8 L619.7,384.6 L617.4,383.3 L615.2,381.8 L610.5,386.4 L608.1,384.3 L609.1,376.4 L607.2,374.3 L605.4,372.1 L599.6,374.4 L597.7,371.5 L600.5,364.7 L599.2,362 L597.9,359.2 L591.7,358.9 L590.5,355.6 L594.9,350.5 L594.2,347.5 L593.6,344.4 L587.5,341.6 L587.1,338.1 L592.7,335.2 L592.7,332.2 L592.9,329.2 L587.5,324.1 L588,320.7 L594.2,320.4 L594.9,317.6 L595.8,314.9 L591.7,308.1 L593,305.3 L599.2,307.5 L600.6,305.3 L602.1,303.1 L599.6,295.3 L601.6,293.2 L607.2,297.7 L609.1,296.2 L611.1,294.9 L610.5,286.7 L613,285.6 L617.4,292.1 L619.7,291.5 L622,291.1 L623.4,283.4 L626.1,283.4 L628.9,291.1 L631.3,291.4 L633.6,292 L636.9,285.5 L639.5,286.6 L640.6,294.8 L642.8,296.1 L645,297.6 L649.7,293 L652.1,295.1 L651.1,303 L653,305.1 L654.9,307.3 L660.6,305 L662.5,307.9 L659.7,314.7 L661.1,317.4 L662.3,320.2 L668.6,320.5 L669.7,323.8 L665.3,328.9Z" fill="#8c8c8c" stroke="#1a1a1a" stroke-width="0.8"/>
<path d="M673.1,341.3 L667.5,344.2 L667.5,344.2 L673.1,341.3Z M672.2,358.7 L666,359 L666,359 L672.2,358.7Z M666,359 L665.3,361.8 L665.3,361.8 L666,359Z M665.3,361.8 L664.4,364.5 L664.4,364.5 L665.3,361.8Z M668.5,371.3 L667.2,374.1 L667.3,374.1 L668.6,371.3Z M661,371.9 L659.6,374.1 L659.7,374.1 L661,371.9Z M659.6,374.1 L658.2,376.3 L658.2,376.3 L659.7,374.1Z M660.6,384.1 L658.6,386.2 L658.6,386.2 L660.6,384.1Z M653,381.7 L651.1,383.2 L651.1,383.2 L653,381.7Z M651.1,383.2 L649.1,384.5 L649.1,384.5 L651.1,383.2Z M649.7,392.7 L647.2,393.8 L647.2,393.8 L649.7,392.7Z M642.8,387.3 L640.5,387.9 L640.5,387.9 L642.8,387.3Z M640.5,387.9 L638.2,388.3 L638.3,388.3 L640.5,387.9Z M626.6,387.4 L623.3,393.9 L623.3,393.9 L626.6,387.4Z M615.2,381.8 L610.5,386.4 L610.5,386.4 L615.2,381.8Z M605.4,372.1 L599.6,374.4 L599.6,374.4 L605.4,372.1Z M662.5,307.9 L659.7,314.7 L659.7,314.7 L662.5,307.9Z M669.7,323.8 L665.3,328.9 L665.3,328.9 L669.7,323.8Z" fill="#a8a8a8" stroke="#1a1a1a" stroke-width="0.6"/>
<path d="M666,331.9 L666.6,335 L666.6,335 L666,331.9Z M666.6,335 L672.7,337.8 L672.7,337.8 L666.6,335Z M672.7,337.8 L673.1,341.3 L673.1,341.3 L672.7,337.8Z M667.5,344.2 L667.5,347.2 L667.5,347.2 L667.5,344.2Z M667.5,347.2 L667.3,350.2 L667.3,350.2 L667.5,347.2Z M667.3,350.2 L672.7,355.3 L672.7,355.3 L667.3,350.2Z M672.7,355.3 L672.2,358.7 L672.2,358.7 L672.7,355.3Z M664.4,364.5 L668.5,371.3 L668.6,371.3 L664.4,364.5Z M658.2,376.3 L660.6,384.1 L660.6,384.1 L658.2,376.3Z M649.1,384.5 L649.7,392.7 L649.7,392.7 L649.1,384.5Z M638.2,388.3 L636.8,396 L636.9,396 L638.3,388.3Z M593,305.3 L599.2,307.5 L599.2,307.5 L593,305.3Z M601.6,293.2 L607.2,297.7 L607.2,297.7 L601.6,293.2Z M613,285.6 L617.4,292.1 L617.4,292.1 L613,285.6Z M623.4,283.4 L626,283.4 L626.1,283.4 L623.4,283.4Z M626,283.4 L628.9,291.1 L628.9,291.1 L626.1,283.4Z M628.9,291.1 L631.3,291.4 L631.3,291.4 L628.9,291.1Z M631.3,291.4 L633.6,292 L633.6,292 L631.3,291.4Z M636.9,285.5 L639.5,286.6 L639.5,286.6 L636.9,285.5Z M639.5,286.6 L640.5,294.8 L640.6,294.8 L639.5,286.6Z M640.5,294.8 L642.8,296.1 L642.8,296.1 L640.6,294.8Z M642.8,296.1 L645,297.6 L645,297.6 L642.8,296.1Z M649.7,293 L652.1,295.1 L652.1,295.1 L649.7,293Z M652.1,295.1 L651.1,303 L651.1,303 L652.1,295.1Z M651.1,303 L653,305.1 L653,305.1 L651.1,303Z M653,305.1 L654.8,307.3 L654.9,307.3 L653,305.1Z M660.6,305 L662.5,307.9 L662.5,307.9 L660.6,305Z M659.7,314.7 L661,317.4 L661.1,317.4 L659.7,314.7Z M661,317.4 L662.3,320.2 L662.3,320.2 L661.1,317.4Z M662.3,320.2 L668.6,320.5 L668.6,320.5 L662.3,320.2Z M668.6,320.5 L669.7,323.8 L669.7,323.8 L668.6,320.5Z M665.3,328.9 L666,331.9 L666,331.9 L665.3,328.9Z" fill="#7e7e7e" stroke="#1a1a1a" stroke-width="0.6"/>
<path d="M666,331.9 L666.6,335 L672.7,337.8 L673.1,341.3 L667.5,344.2 L667.5,347.2 L667.3,350.2 L672.7,355.3 L672.2,358.7 L666,359 L665.3,361.8 L664.4,364.5 L668.5,371.3 L667.2,374.1 L661,371.9 L659.6,374.1 L658.2,376.3 L660.6,384.1 L658.6,386.2 L653,381.7 L651.1,383.2 L649.1,384.5 L649.7,392.7 L647.2,393.8 L642.8,387.3 L640.5,387.9 L638.2,388.3 L636.8,396 L634.2,396 L631.3,388.3 L628.9,388 L626.6,387.4 L623.3,393.9 L620.7,392.8 L619.7,384.6 L617.4,383.3 L615.2,381.8 L610.5,386.4 L608.1,384.3 L609.1,376.4 L607.2,374.3 L605.4,372.1 L599.6,374.4 L597.7,371.5 L600.5,364.7 L599.2,362 L597.9,359.2 L591.6,358.9 L590.5,355.6 L594.9,350.5 L594.2,347.5 L593.6,344.4 L587.5,341.6 L587.1,338.1 L592.7,335.2 L592.7,332.2 L592.9,329.2 L587.5,324.1 L588,320.7 L594.2,320.4 L594.9,317.6 L595.8,314.9 L591.7,308.1 L593,305.3 L599.2,307.5 L600.6,305.3 L602,303.1 L599.6,295.3 L601.6,293.2 L607.2,297.7 L609.1,296.2 L611.1,294.9 L610.5,286.7 L613,285.6 L617.4,292.1 L619.7,291.5 L622,291.1 L623.4,283.4 L626,283.4 L628.9,291.1 L631.3,291.4 L633.6,292 L636.9,285.5 L639.5,286.6 L640.5,294.8 L642.8,296.1 L645,297.6 L649.7,293 L652.1,295.1 L651.1,303 L653,305.1 L654.8,307.3 L660.6,305 L662.5,307.9 L659.7,314.7 L661,317.4 L662.3,320.2 L668.6,320.5 L669.7,323.8 L665.3,328.9Z" fill="#a4a4a4" stroke="#111" stroke-width="1.3"/>
<ellipse cx="630.1" cy="339.7" rx="25.7" ry="34.5" transform="rotate(-12.2 630.1 339.7)" fill="#a0a0a0" stroke="#111" stroke-width="1.1"/>
</g>
<ellipse cx="560.7" cy="373.7" rx="163.7" ry="110.7" transform="rotate(79.6 560.7 373.7)" fill="none" stroke="#111" stroke-width="1.2"/>
<ellipse cx="502.2" cy="209.2" rx="6" ry="9.8" transform="rotate(-12 502.2 209.2)" fill="#0a0a0a" stroke="#444" stroke-width="1"/>
<ellipse cx="680.8" cy="345.3" rx="8.6" ry="10.6" transform="rotate(-12 680.8 345.3)" fill="#0a0a0a" stroke="#444" stroke-width="1"/>
<ellipse cx="581.4" cy="550.5" rx="7" ry="9.3" transform="rotate(-12 581.4 550.5)" fill="#0a0a0a" stroke="#444" stroke-width="1"/>
<path d="M443.9,323 C448.2,322.8 460,321.6 470,321.5 C480,321.4 493.6,320.2 504,322.4 C514.4,324.5 525,328.8 532.6,334.4 C540.2,340 545.4,346.3 549.4,355.9 C553.4,365.5 556,381.4 556.6,391.8 C557.2,402.2 554.9,410.8 553,418 C551.1,425.2 550,429 545,435 C540,441 532.2,448.4 523,454 C513.8,459.6 501.5,465.2 489.7,468.6 C477.9,472 458.6,473.4 452.4,474.4 L449,398 Z" fill="url(#gCollar)" stroke="#111" stroke-width="1.3"/>
<path d="M469.7,323.1 A43,73.5 -10 0,1 495.3,467.9" fill="none" stroke="#111" stroke-width="1.3"/>
<ellipse cx="449.5" cy="398" rx="43" ry="76" transform="rotate(-10 449.5 398)" fill="#878787" stroke="#111" stroke-width="1.3"/>
<path d="M494,411 L555.8,397" stroke="#222" stroke-width="0.8"/>
<path d="M434.7,325 V352 H444.9 V323.5" fill="#9e9e9e" stroke="#222" stroke-width="1.1"/><path d="M406,353 H434.7" stroke="#222" stroke-width="1"/>
<path d="M443,449.5 V466 L452.4,469 V447.5" fill="#9a9a9a" stroke="#222" stroke-width="1.1"/>
<path d="M322.8,361.4 L448,352.4 C462,356 474,380 474,399.7 C474,420 468,436 461,442.8 L344.6,475.5 Z" fill="url(#gShaft)"/>
<path d="M322.8,361.4 L448,352.4 M461,442.8 L344.6,475.5" fill="none" stroke="#111" stroke-width="1.2"/>
<path d="M448,352.4 C466,362 476,385 474,400" fill="none" stroke="#444" stroke-width="0.7" stroke-dasharray="2,1.5"/>
<path d="M474,400 C473.5,420 469,436 461,443.5" fill="none" stroke="#111" stroke-width="1.2"/>
<ellipse cx="335.5" cy="418" rx="26" ry="57.2" transform="rotate(-13 335.5 418)" fill="#6d6d6d" stroke="#111" stroke-width="1.3"/>
<ellipse cx="333.7" cy="416.6" rx="17" ry="35.4" transform="rotate(-8 333.7 416.6)" fill="url(#gBore)" stroke="#111" stroke-width="1.3"/>
<path d="M316.8,411.5 L350.5,405.5" stroke="#222" stroke-width="0.8"/>
<path d="M324.6,362 L326,380 L333.2,378.5 L332,361.2 Z" fill="#b8b8b8" stroke="#111" stroke-width="1"/>
<path d="M334.2,452.5 L336,471 L344.6,475.5 L343,451 Z" fill="#b8b8b8" stroke="#111" stroke-width="1"/>
</svg>
<!--/MODEL-->
<!-- tab text -->
<div class="abs" style="left:81px;top:88px;font-size:15px;color:#222">test.jcad</div>

<!-- header menus -->
<div class="menu" style="left:896px;letter-spacing:-1.2px">File</div>
<div class="menu" style="left:947px;letter-spacing:-0.6px">Edit</div>
<div class="menu" style="left:1004px;letter-spacing:-0.9px">View</div>
<div class="menu" style="left:1069px;letter-spacing:-0.5px">Help</div>
<div class="ul" style="left:895px;width:10px"></div>
<div class="ul" style="left:948px;width:10px"></div>
<div class="ul" style="left:1004px;width:13px"></div>
<div class="ul" style="left:1070px;width:14px"></div>
<div class="abs" style="left:1134px;top:13px;width:2px;height:48px;background:#f3e3bd"></div>
<div class="menu" style="left:1157px;letter-spacing:-0.75px">Anonymous Kale</div>
<div class="abs" style="left:1319px;top:13px;width:48px;height:48px;border-radius:50%;background:#6fd574"></div>
<div class="abs" style="left:1328px;top:24px;font-size:24px;color:#0b1d18;letter-spacing:-1px">AK</div>


<svg id="ui" width="1400" height="627" style="left:0;top:0">
<!-- logo -->
<g fill="none" stroke="#f3e2ba" stroke-width="2" stroke-linecap="butt">
<path d="M55,20.6 H63 V41 C63,45.8 60,48 56.2,48 C53.4,48 51.2,46.9 49.9,45.2"/>
<path d="M69.4,31.2 V40.5 C69.4,45.2 72.2,47.7 75.9,47.7 C79.6,47.7 82.4,45.2 82.4,40.5 V31.2 M82.4,40 V47.8"/>
<path d="M88.4,31.2 V55"/>
<circle cx="96.8" cy="39.5" r="8.1"/>
<path d="M108.9,31.3 V40 C108.9,44.9 111.8,47.5 115.8,47.5 C119.8,47.5 122.9,44.9 122.9,40 M122.9,31.3 V47.5 C122.9,52.2 119.7,54.7 115.7,54.7 C112.8,54.7 110.7,53.4 109.5,51.4"/>
<path d="M128.6,24.6 V43.2 C128.6,46.2 130.6,47.6 134,47.4 M123.2,31.4 H134"/>
<path d="M151.4,44 A8,8 0 1,1 150.2,33.8 L138.9,44.6"/>
<path d="M156.7,31.3 V47.8 M156.7,38.6 C157.5,34 160.5,31.8 165.6,32"/>
<path d="M190.6,23.6 A14.2,14.2 0 1,0 191.4,44.6"/>
<path d="M195.2,47.8 L208.4,20.2 L221.8,47.8 M199.5,36.6 H217"/>
<path d="M226.3,20.6 V47.4 H229.5 C236.4,47.4 240.5,41.5 240.5,34 C240.5,26.5 236.4,20.6 229.5,20.6 Z"/>
</g>
<!-- toolbar icons -->
<g fill="#117378" stroke="none">
<path d="M59.9,122.3 L59.9,128.7 L66.1,128.7 Z"/>
<path d="M110.9,122.3 L110.9,128.7 L104.7,128.7 Z"/>
</g>
<g fill="none" stroke="#117378" stroke-width="1.9">
<path d="M62.8,126.4 Q68.5,119.5 75.4,128.6"/>
<path d="M108,126.4 Q102.3,119.5 95.4,128.6"/>
</g>
<g fill="none" stroke="#0d6265" stroke-width="1.8" stroke-linejoin="round">
<!-- box -->
<path d="M132.5,134 V119.5 L134.8,117.2 H148.6 V131.6 L146.3,134 Z M132.5,119.5 H146.3 V134 M146.3,119.5 L148.6,117.2"/>
<path d="M135.2,124 V126.6 M134.8,130.8 H136.6 M139.2,130.8 H141.6 M144.0,130.8 H145.8" stroke-width="1.6"/>
<!-- cylinder -->
<rect x="168.6" y="116.8" width="16.2" height="17.8" rx="2"/>
<path d="M168.6,119.2 Q176.7,122 184.8,119.2"/>
<path d="M171.8,132 H175 M177.4,132 H181" stroke-width="1.6"/>
<!-- sphere -->
<circle cx="212.2" cy="125.5" r="7.6"/>
<!-- cone -->
<path d="M248.4,116.6 L240.3,132.4 Q248.5,135.6 256.7,132.4 Z"/>
<path d="M244.2,131 H247.2 M249.8,131 H252.8" stroke-width="1.6"/>
<!-- torus -->
<ellipse cx="283.5" cy="125.6" rx="8" ry="5.4" stroke-width="1.8"/>
<ellipse cx="283.5" cy="125.6" rx="5.6" ry="3.3" stroke-width="1"/>
<rect x="279.3" y="124" width="8.4" height="3.2" rx="1.6" stroke-width="1.4"/>
</g>
<g fill="#137a7f">
<!-- union -->
<circle cx="318" cy="128" r="6.1"/>
<circle cx="324" cy="122.8" r="5.2" fill="#fff" stroke="#137a7f" stroke-width="1.6"/>
<!-- fuse -->
<circle cx="353.9" cy="128" r="6.3"/>
<circle cx="359.4" cy="122.6" r="6.3"/>
</g>
<!-- intersection -->
<defs><clipPath id="ci"><circle cx="395.2" cy="122.8" r="5.9"/></clipPath></defs>
<circle cx="390.6" cy="127.8" r="5.9" fill="#137a7f" clip-path="url(#ci)"/>
<g fill="none" stroke="#137a7f" stroke-width="1.6">
<circle cx="390.6" cy="127.8" r="5.9"/>
<circle cx="395.2" cy="122.8" r="5.9"/>
<!-- extrude -->
<path d="M420.4,131.6 L424.4,126.2 H435.4 L431.6,131.6 Z" stroke-linejoin="round"/>
<path d="M428.5,119.5 V130"/>
</g>
<path d="M428.5,116.8 L425.8,120.4 H431.2 Z" fill="#137a7f"/>
<!-- pencil -->
<g fill="#137a7f">
<path d="M457.2,129.2 L467.8,118.6 L471.6,122.4 L461,133 L457,133.2 Z"/>
<path d="M469,117.4 L470.8,115.6 Q471.6,114.8 472.4,115.6 L474.6,117.8 Q475.4,118.6 474.6,119.4 L472.8,121.2 Z"/>
</g>
<path d="M458.6,130.6 L468.8,120.4" stroke="#fff" stroke-width="0.6"/>
<!-- axes -->
<g stroke="#137a7f" stroke-width="1.6" fill="none">
<path d="M502.5,127.4 V119.6 M502.5,127.4 H509.6 M502.5,127.4 L495.6,130.4"/>
</g>
<g fill="#137a7f">
<path d="M502.5,117.6 L500,120.6 H505 Z"/>
<path d="M511.4,127.4 L508.4,125 V129.8 Z"/>
<circle cx="495" cy="130.6" r="1.6"/>
</g>
<!-- frame cube -->
<use href="#fcube" transform="translate(537.6,125.7) scale(0.8)" stroke="#137a7f"/>
<!-- tab close and plus -->
<g stroke="#0f5a5d" stroke-width="1.5" fill="none">
<path d="M279.5,89.3 L290,99.3 M290,89.3 L279.5,99.3"/>
</g>
<g stroke="#137a7f" stroke-width="1.6" fill="none">
<path d="M318.9,89 V100 M313.4,94.5 H324.4"/>
</g>
</svg>

<svg width="1400" height="627" style="left:0;top:0">
<defs>
<g id="fcube" fill="none" stroke-width="2.2" stroke-linecap="round" stroke-linejoin="round">
<path d="M-10.2,-6.4 A3.8,3.8 0 0,1 -6.4,-10.2 M6.4,-10.2 A3.8,3.8 0 0,1 10.2,-6.4 M10.2,6.4 A3.8,3.8 0 0,1 6.4,10.2 M-6.4,10.2 A3.8,3.8 0 0,1 -10.2,6.4"/>
<path d="M0,-6.9 L6.1,-3.5 V3.5 L0,6.9 L-6.1,3.5 V-3.5 Z M-6.1,-3.5 L0,-0.2 L6.1,-3.5 M0,-0.2 V6.9"/>
</g>
</defs>
<path d="M12.1,95.2 H18.6 L20.8,97.4 H29 Q30.5,97.4 30.5,98.9 V109.5 Q30.5,111 29,111 H12.1 Q10.6,111 10.6,109.5 V96.7 Q10.6,95.2 12.1,95.2 Z" fill="#137b80"/>
<!-- people -->
<g fill="#137b80">
<circle cx="27.2" cy="161.2" r="2.6"/>
<path d="M23.2,169.7 Q24.4,164.8 27.6,164.8 Q31,164.8 32.1,169.7 Z"/>
<circle cx="12.4" cy="163.4" r="1.9"/>
<path d="M9,169.7 Q9.6,166.3 12.1,166.3 Q14.6,166.3 15.3,169.7 Z"/>
<circle cx="19.9" cy="162.3" r="3.4" stroke="#eeeeee" stroke-width="1.2"/>
<path d="M13.1,174.1 Q13.8,167.4 20,167.4 Q26.2,167.4 26.9,174.1 Z" stroke="#eeeeee" stroke-width="1.2"/>
</g>
<use href="#fcube" x="20.7" y="229.2" stroke="#137b80"/>
<use href="#fcube" x="1383.2" y="103.4" stroke="#137b80"/>
</svg>
</body></html>
